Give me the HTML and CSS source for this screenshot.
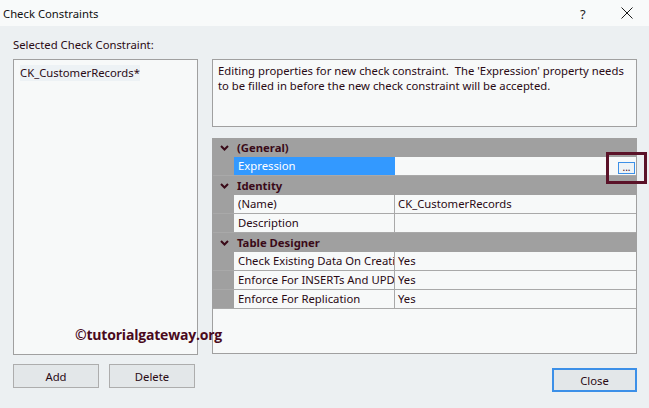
FILE: index.html
```html
<!DOCTYPE html>
<html>
<head>
<meta charset="utf-8">
<link rel="stylesheet" href="styles.css">
</head>
<body>
<div class="dialog">
  <div class="titlebar">
    <span class="title">Check Constraints</span>
    <span class="help">?</span>
    <svg class="close-x" width="12" height="12" viewBox="0 0 12 12"><path d="M0.5 0.5 L11.5 11.5 M11.5 0.5 L0.5 11.5" stroke="#1a1a1a" stroke-width="1" fill="none"/></svg>
  </div>
  <div class="content">
    <div class="label">Selected Check Constraint:</div>
    <div class="main">
      <div class="leftcol">
        <div class="listbox">
          <div class="item">CK_CustomerRecords*</div>
          <div class="watermark">©tutorialgateway.org</div>
        </div>
        <div class="btnrow">
          <div class="btn">Add</div>
          <div class="btn">Delete</div>
        </div>
      </div>
      <div class="rightcol">
        <div class="desc">Editing properties for new check constraint.&nbsp; The 'Expression' property needs to be filled in before the new check constraint will be accepted.</div>
        <div class="grid">
          <div class="cat"><span class="chev"><svg width="9" height="6" viewBox="0 0 9 6"><path d="M1 1 L4.5 4.5 L8 1" stroke="#3a0a18" stroke-width="2" fill="none"/></svg></span><span class="cattext">(General)</span></div>
          <div class="row"><span class="gut"></span><span class="name sel">Expression</span><span class="val"><span class="dots">...</span></span></div>
          <div class="cat"><span class="chev"><svg width="9" height="6" viewBox="0 0 9 6"><path d="M1 1 L4.5 4.5 L8 1" stroke="#3a0a18" stroke-width="2" fill="none"/></svg></span><span class="cattext">Identity</span></div>
          <div class="row"><span class="gut"></span><span class="name">(Name)</span><span class="val">CK_CustomerRecords</span></div>
          <div class="row"><span class="gut"></span><span class="name">Description</span><span class="val"></span></div>
          <div class="cat"><span class="chev"><svg width="9" height="6" viewBox="0 0 9 6"><path d="M1 1 L4.5 4.5 L8 1" stroke="#3a0a18" stroke-width="2" fill="none"/></svg></span><span class="cattext">Table Designer</span></div>
          <div class="row"><span class="gut"></span><span class="name">Check Existing Data On Creati</span><span class="val">Yes</span></div>
          <div class="row"><span class="gut"></span><span class="name">Enforce For INSERTs And UPD</span><span class="val">Yes</span></div>
          <div class="row"><span class="gut"></span><span class="name">Enforce For Replication</span><span class="val">Yes</span></div>
          <div class="highlight"></div>
        </div>
        <div class="btnrow right">
          <div class="btn primary">Close</div>
        </div>
      </div>
    </div>
  </div>
</div>
</body>
</html>
```
FILE: styles.css
```css
* { box-sizing: border-box; }
html, body { margin: 0; padding: 0; }
body {
  width: 649px;
  height: 408px;
  overflow: hidden;
  background: #ecf0f2;
  font-family: "Noto Sans", "DejaVu Sans", sans-serif;
  font-size: 11.3px;
  color: #2a0a14;
}
.dialog { width: 649px; height: 408px; }
.titlebar {
  height: 26px;
  background: #f8fafa;
  display: flex;
  align-items: center;
  padding-left: 3px;
  position: relative;
}
.title { flex: 1; color: #111; }
.help { position: absolute; left: 580px; top: 5px; font-size: 13px; color: #222; }
.close-x { position: absolute; left: 621px; top: 7px; }
.content { padding: 12px 0 0 13px; }
.label { height: 21px; line-height: 14px; }
.main { display: flex; gap: 14px; }
.leftcol { width: 185px; display: flex; flex-direction: column; position: relative; z-index: 2; }
.listbox {
  height: 296px;
  background: #f7f9f9;
  border: 1px solid #a0a0a0;
  padding: 5px 6px;
  position: relative;
}
.item {
  height: 16px;
  line-height: 16px;
  background: #edf2f5;
  width: 120px;
  white-space: nowrap;
}
.watermark {
  position: absolute;
  left: 61px;
  top: 265px;
  font-weight: bold;
  font-size: 14px;
  letter-spacing: -0.2px;
  color: #4a0a1c;
  white-space: nowrap;
  font-family: "Open Sans", sans-serif;
}
.btnrow { display: flex; gap: 10px; margin-top: 9px; }
.btnrow.right { justify-content: flex-end; margin-top: 14px; }
.btn {
  width: 86px;
  height: 24px;
  border: 1px solid #adadad;
  background: #e3e7e9;
  display: flex;
  align-items: center;
  justify-content: center;
}
.btn.primary { width: 85px; border: 2px solid #3c90e8; height: 24px; }
.rightcol { width: 425px; display: flex; flex-direction: column; }
.desc {
  height: 68px;
  border: 1px solid #a0a0a0;
  background: #f7f9f9;
  padding: 3px 5px;
  line-height: 15px;
}
.grid {
  margin-top: 11px;
  height: 216px;
  border: 1px solid #a0a0a0;
  border-top: none;
  background: #f7f9f9;
  position: relative;
}
.cat {
  height: 19px;
  background: #a0a0a0;
  display: flex;
  align-items: center;
  font-weight: bold;
  color: #3a0a18;
}
.chev { width: 24px; display: flex; justify-content: center; padding-right: 2px; }
.row {
  height: 19px;
  display: flex;
  border-bottom: 1px solid #a9a9a9;
}
.gut { width: 21px; background: #a0a0a0; }
.name {
  width: 161px;
  padding-left: 4px;
  border-right: 1px solid #a9a9a9;
  white-space: nowrap;
  overflow: hidden;
  line-height: 18px;
}
.name.sel { background: #3399ff; color: #fff; border-right-color: #3399ff; }
.val {
  flex: 1;
  padding-left: 3px;
  line-height: 18px;
  position: relative;
  background: #f7f9f9;
}
.dots {
  position: absolute;
  right: 1px;
  top: 5px;
  width: 17px;
  height: 12px;
  border: 1px solid #3c90e8;
  background: #eef3f6;
  font-size: 10px;
  line-height: 9px;
  text-align: center;
  color: #3a0a18;
}
.highlight {
  position: absolute;
  left: 393px;
  top: 14px;
  width: 41px;
  height: 32px;
  border: 3px solid #5a1228;
}
```
